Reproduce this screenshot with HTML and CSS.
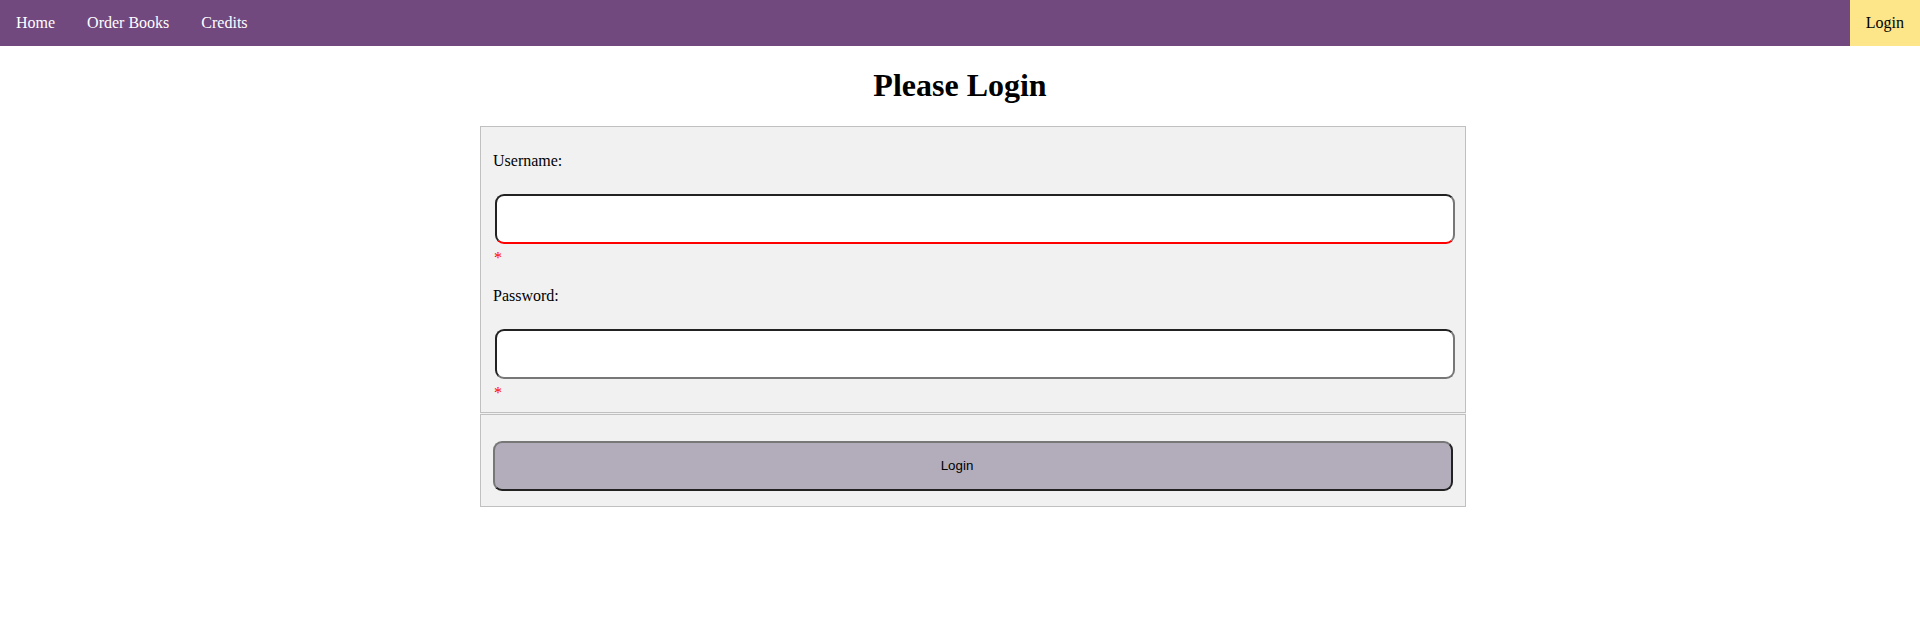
FILE: index.html
```html
<!DOCTYPE html>
<html lang="en">
<head>
<meta charset="utf-8">
<title>Please Login</title>
<link rel="stylesheet" href="styles.css">
</head>
<body>
<nav class="topnav">
  <div class="nav-left">
    <a class="nav-link" href="#">Home</a>
    <a class="nav-link" href="#">Order Books</a>
    <a class="nav-link" href="#">Credits</a>
  </div>
  <a class="nav-link nav-login" href="#">Login</a>
</nav>
<h1 class="title">Please Login</h1>
<form class="login-form">
  <div class="fields">
    <label class="field-label" for="username">Username:</label>
    <input class="field-input field-invalid" id="username" type="text">
    <div class="req">*</div>
    <label class="field-label field-label-next" for="password">Password:</label>
    <input class="field-input" id="password" type="password">
    <div class="req">*</div>
  </div>
  <div class="actions">
    <button class="login-btn" type="button">Login</button>
  </div>
</form>
</body>
</html>
```
FILE: styles.css
```css
html, body {
  margin: 0;
  padding: 0;
  background: #ffffff;
  font-family: "Liberation Serif", "Times New Roman", serif;
  font-size: 16px;
  color: #000;
}

.topnav {
  display: flex;
  justify-content: space-between;
  height: 46px;
  background: #71497f;
}

.nav-left {
  display: flex;
}

.nav-link {
  display: flex;
  align-items: center;
  padding: 0 16px;
  color: #ffffff;
  text-decoration: none;
  line-height: 18px;
}

.nav-login {
  background: #fde58a;
  color: #000000;
}

.title {
  margin: 21.44px 0;
  font-size: 32px;
  font-weight: bold;
  text-align: center;
  line-height: normal;
}

.login-form {
  margin: 0 0 0 25%;
  width: calc(50% + 26px);
  background: #f1f1f1;
}

.fields {
  border: 1px solid #c0c0c0;
  padding: 12px 12px 10px;
  background: #f1f1f1;
}

.field-label {
  display: block;
  margin-top: 13px;
  line-height: 18px;
}

.field-label-next {
  margin-top: 20px;
}

.field-input {
  display: block;
  box-sizing: border-box;
  width: 100%;
  height: 50px;
  margin: 24px 0 0 2px;
  background: #ffffff;
  border: 2px solid;
  border-color: #222222 #777777 #777777 #222222;
  border-radius: 9px;
  outline: none;
  font-size: 16px;
}

.field-invalid {
  border-bottom-color: #ff0000;
}

.req {
  margin: 5px 0 0 1px;
  height: 18px;
  line-height: 18px;
  color: #ff0000;
}

.actions {
  margin-top: 1px;
  border: 1px solid #c0c0c0;
  padding: 26px 12px 15px;
  background: #f1f1f1;
}

.login-btn {
  display: block;
  box-sizing: border-box;
  width: 100%;
  height: 50px;
  margin: 0;
  padding: 0 32px 0 0;
  background: #b3adbb;
  border: 2px solid;
  border-color: #777777 #222222 #222222 #777777;
  border-radius: 9px;
  font-family: "Liberation Sans", Arial, sans-serif;
  font-size: 13.333px;
  color: #000;
}
```
